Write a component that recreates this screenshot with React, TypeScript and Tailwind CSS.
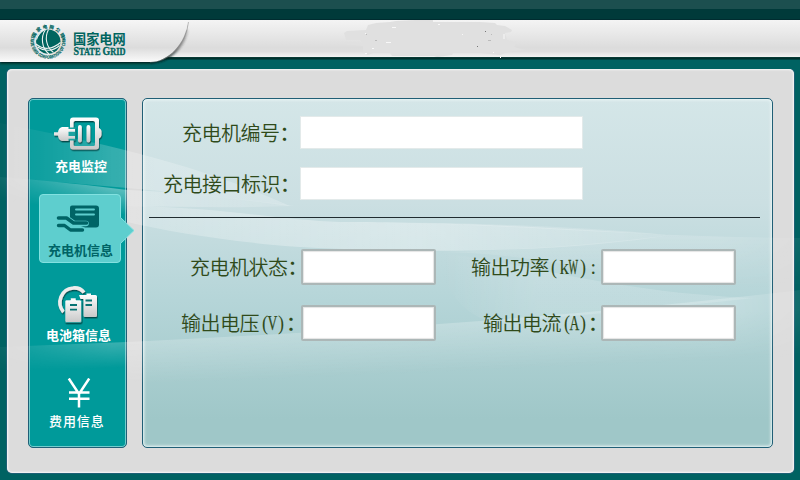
import type { ReactNode } from 'react';

const SANS = "font-['Noto_Sans_CJK_SC',sans-serif]";

function StateGridEmblem() {
  return (
    <svg className="h-[38px] w-[38px] shrink-0" viewBox="0 0 38 38">
      <defs>
        <path id="ring-top" d="M4.8 19.5 A14.2 14.2 0 0 1 33.2 19.5" />
        <path id="ring-bottom" d="M2.8 12 A17.4 17.4 0 1 0 35.2 12" />
      </defs>
      <circle cx="19.3" cy="18.6" r="12.2" fill="#00655f" />
      <g fill="none" stroke="#eef3f2" strokeWidth="1.1">
        <path d="M16.5 6.500 C11.500 14 12.500 25 20 31" />
        <path d="M19.500 6.500 C15.500 14 17 24 24.500 29.500" />
        <path d="M7 21 C14 27 23 27 31.500 19.500" />
        <path d="M8.500 24 C15 28.500 24 28.500 30.500 22.500" />
        <path d="M7.500 16.500 C9 11.500 11.500 9 15 7" />
      </g>
      <g fill="#00655f" stroke="#00655f" strokeWidth="0.15" className={SANS} fontWeight="700">
        <text fontSize="4.600">
          <textPath href="#ring-top" startOffset="5" textLength="35">国家电网公司</textPath>
        </text>
        <text fontSize="4.300">
          <textPath href="#ring-bottom" startOffset="1" textLength="66" lengthAdjust="spacingAndGlyphs">STATE GRID CORPORATION OF CHINA</textPath>
        </text>
      </g>
    </svg>
  );
}

function Header() {
  return (
    <header className="relative h-[69px] shrink-0 bg-[#006262]">
      <div className="h-[9px] bg-[#1c4f4f]" />
      <div className="h-[11px] border-b border-[#002c30] bg-[#003a3a]" />
      <div className="h-[37px] bg-[linear-gradient(#f4f4f4,#dcdcdc_75%,#dedede_85%,#f3f3f3)]" />
      <div className="h-[3px] bg-[linear-gradient(#0c4039,#002f2c_50%,#00504f)]" />
      <svg className="absolute left-0 top-5 h-[49px] w-full" viewBox="0 20 800 49">
        <defs>
          <linearGradient id="tab" x1="0" y1="0" x2="0" y2="1">
            <stop offset="0" stopColor="#f6f6f6" />
            <stop offset="0.66" stopColor="#dcdcdc" />
            <stop offset="1" stopColor="#fafafa" />
          </linearGradient>
          <linearGradient id="tab-shade" gradientUnits="userSpaceOnUse" x1="188" y1="22" x2="165" y2="60">
            <stop offset="0" stopColor="#444" stopOpacity="0.2" />
            <stop offset="0.6" stopColor="#333" stopOpacity="0.5" />
            <stop offset="1" stopColor="#001f1c" stopOpacity="0.95" />
          </linearGradient>
          <filter id="tab-shadow" x="-5%" y="-10%" width="112%" height="130%">
            <feGaussianBlur stdDeviation="1.3" />
          </filter>
        </defs>
        <path
          d="M340 44 L348 42 L363 43 L360 40 L346 40 L344 33 L347 31 L366 30 L368 25 L376 23 L390 22 L396 21 L415 20 H433 V22 L480 22 L495 23 L497 25 L505 26 L512 30 L511 32 L505 33 L507 40 L517 42 L514 47 L525 50 L508 52 L500 55 L480 53 L453 53 L452 55 L437 57 L434 56 L392 56 L390 53 L373 53 L368 55 L363 52 V46 Z"
          fill="#e0e0e0"
        />
        <path d="M392 27.500h4 M438 24.500h2 M386 42.500h5 M372 48.500h2 M365 53.500h2 M462 34.500h1 M493 52.500h1 M365 33.500h1 M500 57.500h1 M504 34v5" stroke="#f8f8f8" />
        <path d="M485 31.500h1 M477 46.500h1" stroke="#777" />
        <path d="M488 40.500h3 M491 34.500h1 M375 40.500h2 M366 34.500h1" stroke="#bbb" />
        <path d="M0 30 H188 C186 47 169 63.500 150 63.500 H0 Z" fill="url(#tab-shade)" filter="url(#tab-shadow)" />
        <path d="M188.300 22 C186 45 169 62 150 62" fill="none" stroke="#888" strokeWidth="1.200" opacity="0.6" />
        <path d="M0 20 H188 C186 44 168 62 150 62 H0 Z" fill="url(#tab)" />
      </svg>
      <div className="absolute left-[29px] top-[23px] flex text-[#00655f]">
        <StateGridEmblem />
        <div className="ml-[6px] mt-[9px]">
          <div className={`${SANS} h-[14px] text-[13.2px] leading-[14px] font-bold`}>国家电网</div>
          <svg className="h-[13px] w-[54px]" viewBox="0 0 54 13">
            <text x="0.500" y="9" textLength="52" lengthAdjust="spacingAndGlyphs" className="font-['Liberation_Serif',serif]" fontWeight="700" fill="#00655f" stroke="#00655f" strokeWidth="0.350">
              <tspan fontSize="12">S</tspan>
              <tspan fontSize="10">TATE </tspan>
              <tspan fontSize="12">G</tspan>
              <tspan fontSize="10">RID</tspan>
            </text>
          </svg>
        </div>
      </div>
    </header>
  );
}

function LightWaves() {
  return (
    <svg className="pointer-events-none absolute inset-0 z-10 h-full w-full" viewBox="0 0 800 480">
      <defs>
        <linearGradient id="edge" gradientUnits="userSpaceOnUse" x1="0" y1="0" x2="800" y2="0">
          <stop offset="0" stopColor="#fff" stopOpacity="0.15" />
          <stop offset="0.14" stopColor="#fff" stopOpacity="1" />
          <stop offset="0.9" stopColor="#fff" stopOpacity="1" />
          <stop offset="1" stopColor="#fff" stopOpacity="0.3" />
        </linearGradient>
        <mask id="edge-mask" maskUnits="userSpaceOnUse" x="0" y="0" width="800" height="480">
          <rect width="800" height="480" fill="url(#edge)" />
        </mask>
        <linearGradient id="w1" gradientUnits="userSpaceOnUse" x1="0" y1="0" x2="300" y2="0">
          <stop offset="0" stopColor="#fff" stopOpacity="0.1" />
          <stop offset="0.45" stopColor="#fff" stopOpacity="0.22" />
          <stop offset="1" stopColor="#fff" stopOpacity="0.2" />
        </linearGradient>
        <linearGradient id="w2" gradientUnits="userSpaceOnUse" x1="100" y1="184" x2="97" y2="212">
          <stop offset="0" stopColor="#fff" stopOpacity="0.4" />
          <stop offset="1" stopColor="#fff" stopOpacity="0" />
        </linearGradient>
        <linearGradient id="w2-tip" gradientUnits="userSpaceOnUse" x1="127" y1="0" x2="295" y2="0">
          <stop offset="0" stopColor="#fff" stopOpacity="0.28" />
          <stop offset="1" stopColor="#fff" stopOpacity="0.12" />
        </linearGradient>
        <linearGradient id="w3" gradientUnits="userSpaceOnUse" x1="120" y1="0" x2="780" y2="0">
          <stop offset="0" stopColor="#fff" stopOpacity="0.2" />
          <stop offset="0.1" stopColor="#fff" stopOpacity="0.24" />
          <stop offset="0.45" stopColor="#fff" stopOpacity="0.36" />
          <stop offset="1" stopColor="#fff" stopOpacity="0.05" />
        </linearGradient>
        <linearGradient id="w4" gradientUnits="userSpaceOnUse" x1="0" y1="235" x2="0" y2="290">
          <stop offset="0" stopColor="#fff" stopOpacity="0.16" />
          <stop offset="1" stopColor="#fff" stopOpacity="0" />
        </linearGradient>
        <linearGradient id="w5" gradientUnits="userSpaceOnUse" x1="400" y1="327" x2="402" y2="374">
          <stop offset="0" stopColor="#fff" stopOpacity="0.22" />
          <stop offset="1" stopColor="#fff" stopOpacity="0" />
        </linearGradient>
        <linearGradient id="w5-left" gradientUnits="userSpaceOnUse" x1="60" y1="345" x2="61" y2="370">
          <stop offset="0" stopColor="#fff" stopOpacity="0.22" />
          <stop offset="1" stopColor="#fff" stopOpacity="0" />
        </linearGradient>
        <linearGradient id="w6" gradientUnits="userSpaceOnUse" x1="440" y1="0" x2="760" y2="0">
          <stop offset="0" stopColor="#fff" stopOpacity="0" />
          <stop offset="0.3" stopColor="#fff" stopOpacity="0.16" />
          <stop offset="1" stopColor="#fff" stopOpacity="0.16" />
        </linearGradient>
      </defs>
      <g mask="url(#edge-mask)">
        <path d="M0 123 C80 139 190 160 290 206 C190 192 90 185 0 177 Z" fill="url(#w1)" />
        <path d="M0 177 C50 181 90 185 127 190 V226 H0 Z" fill="url(#w2)" />
        <path d="M127 190 C190 192 250 201 295 206 C240 208 180 207 127 206 Z" fill="url(#w2-tip)" />
        <path d="M127 206 C220 207 280 220 340 222 C420 222 520 225 670 235 C580 250 450 255 300 247 C230 242 170 232 127 222 Z" fill="url(#w3)" />
        <path d="M340 222 C480 221 620 237 800 238 V290 H754 C650 290 560 253 440 252 C530 250 600 244 670 235 C560 225 450 222 340 222 Z" fill="url(#w4)" />
        <path d="M440 253 C530 263 610 292 754 298 C650 309 570 317 490 322 C455 310 440 280 440 253 Z" fill="url(#w6)" />
        <path d="M127 342 C350 331 570 318 800 290 V382 H127 Z" fill="url(#w5)" />
        <path d="M0 347 L127 342 V382 H0 Z" fill="url(#w5-left)" />
      </g>
    </svg>
  );
}

function PlugIcon() {
  return (
    <svg className="h-[38px] w-[52px]" viewBox="0 0 52 38">
      <defs>
        <linearGradient id="metal" x1="0" y1="0" x2="0" y2="1">
          <stop offset="0" stopColor="#ffffff" />
          <stop offset="1" stopColor="#c8c8c8" />
        </linearGradient>
        <filter id="drop" x="-20%" y="-20%" width="150%" height="150%">
          <feDropShadow dx="0.600" dy="1.400" stdDeviation="0.700" floodColor="#003e3e" floodOpacity="0.850" />
        </filter>
      </defs>
      <g filter="url(#drop)">
        <path fillRule="evenodd" fill="url(#metal)" d="M19 1.500 H42 Q45 1.500 45 4.500 V12 Q47.500 13.500 47.500 15 V19 Q47.500 21 45 22.500 V30.500 Q45 33.500 42 33.500 H19 Q16 33.500 16 30.500 V4.500 Q16 1.500 19 1.500 Z M21 5 Q19.500 5 19.500 6.500 V28.500 Q19.500 30 21 30 H39.500 Q41 30 41 28.500 V6.500 Q41 5 39.500 5 Z" />
        <path fill="#1fa3a1" d="M13 11.500 H21.500 V24.500 H13 Z" />
        <path fill="url(#metal)" d="M0 16.200 H4 Q4.500 12 8 11 H14.500 V13 H21 V15.800 H14.500 V20 H21 V22.800 H14.500 V25 H8 Q4.500 24 4 19.500 H0 Z" />
        <rect x="24" y="9" width="3.800" height="17.500" rx="1.900" fill="url(#metal)" />
        <rect x="32.500" y="9" width="3.800" height="17.500" rx="1.900" fill="url(#metal)" />
      </g>
    </svg>
  );
}

function HandCardIcon() {
  return (
    <svg className="ml-[7px] h-[30px] w-[46px]" viewBox="0 0 46 30">
      <path fill="#006466" d="M16 0.500 H40 Q43 0.500 43 3.500 V19.500 Q43 22.500 40 22.500 H29 L14 17 V2.500 Q14 0.500 16 0.500 Z" />
      <path d="M20 4.500 H38 M20 9.500 H38" stroke="#5ecece" strokeWidth="1.900" strokeLinecap="round" />
      <path d="M2.500 13.500 H11 L18 18.500 H30" fill="none" stroke="#5ecece" strokeWidth="5.600" strokeLinecap="round" strokeLinejoin="round" />
      <path d="M2.500 20.500 H8.500 L15 25 H28" fill="none" stroke="#5ecece" strokeWidth="4.500" strokeLinecap="round" />
      <path d="M2.500 13 H10.500 L17.500 18 H30.500" fill="none" stroke="#006466" strokeWidth="3.600" strokeLinecap="round" strokeLinejoin="round" />
      <path d="M2.500 20.500 H8.500 L14.500 25 H26.500" fill="none" stroke="#006466" strokeWidth="3.400" strokeLinecap="round" strokeLinejoin="round" />
    </svg>
  );
}

function BatteryIcon() {
  return (
    <svg className="h-[42px] w-[44px]" viewBox="0 0 44 42">
      <g filter="url(#drop)">
        <path d="M6.500 27 C-1 18 4 4 16 3 C20.500 2.500 24.500 4.200 27 7.500" fill="none" stroke="#ececec" strokeWidth="3.600" />
        <path fill="url(#metal)" d="M22 10 H29.500 V8.500 H34 V10 H38.500 Q40 10 40 11.500 V30.500 Q40 32 38.500 32 H28 Q26.500 32 26.500 30.500 V14 H23.500 Z" />
        <path fill="url(#metal)" stroke="#079b9b" strokeWidth="0.600" d="M9.500 15 H13.500 V13 H19 V15 H23 Q24.500 15 24.500 16.500 V36 Q24.500 37.500 23 37.500 H9.500 Q8 37.500 8 36 V16.500 Q8 15 9.500 15 Z" />
      </g>
      <path d="M13 20 H20 M13 24.700 H20 M28.500 15.500 H35 M28.500 20 H35" stroke="#087474" strokeWidth="1.800" />
    </svg>
  );
}

function YenIcon() {
  return (
    <svg className="h-[30px] w-[24px]" viewBox="0 0 24 30">
      <path d="M1.800 0.500 L12 16 L22.200 0.500 M12 15 V29.500 M2 14.500 H22.500 M2 20.800 H22.500" fill="none" stroke="#fff" strokeWidth="2.500" />
    </svg>
  );
}

function NavLabel({ children, className = '' }: { children: ReactNode; className?: string }) {
  return <span className={`${SANS} whitespace-nowrap text-[13px] leading-4 ${className}`}>{children}</span>;
}

function Sidebar() {
  return (
    <nav className="h-[350px] w-[99px] shrink-0 rounded-[5px] border border-[#205f76] bg-[#009a9a] text-white shadow-[inset_0_0_0_1px_#72cdcd]">
      <div className="relative z-20 flex flex-col">
        <div className="flex h-[95px] flex-col items-start pl-[25px] pt-[17px]">
          <PlugIcon />
          <NavLabel className="ml-[1px] mt-[4px] font-bold">充电监控</NavLabel>
        </div>
        <div className="relative ml-[10px] h-[69px] w-[82px] rounded-[4px] border border-[#82e1e0] bg-[#5ecece] pl-[9px] pt-[10px] text-[#006466]">
          <HandCardIcon />
          <NavLabel className="-ml-px mt-[7px] block font-bold">充电机信息</NavLabel>
          <svg className="absolute left-[80px] top-[22px] h-[27px] w-[15px]" viewBox="0 0 15 27">
            <path d="M0 0 L1 1 L14 13.500 L1 26 L0 27 Z" fill="#5ecece" />
            <path d="M0.500 0.500 L14 13.500 L0.500 26.500" fill="none" stroke="#82e1e0" />
          </svg>
        </div>
        <div className="flex h-[93px] flex-col items-start pl-[28px] pt-[22px]">
          <BatteryIcon />
          <NavLabel className="-ml-[11px] font-bold">电池箱信息</NavLabel>
        </div>
        <div className="flex flex-col items-start pl-[38px] pt-[22px]">
          <YenIcon />
          <NavLabel className="-ml-[18px] mt-[5px] font-medium tracking-[0.9px]">费用信息</NavLabel>
        </div>
      </div>
    </nav>
  );
}

function Half({ children, squeeze }: { children: string; squeeze: string }) {
  return (
    <span className="inline-block w-[9.600px] font-['Liberation_Serif',serif] text-[20px] font-normal tracking-normal">
      <span className={`inline-block origin-left ${squeeze}`}>{children}</span>
    </span>
  );
}

function Label({ children, className }: { children: ReactNode; className: string }) {
  return (
    <span lang="zh-CN" className={`${SANS} flex shrink-0 whitespace-nowrap text-[20px] leading-6 font-[350] tracking-[-0.5px] text-[#2f4a1a] [text-spacing-trim:space-all] ${className}`}>
      {children}
    </span>
  );
}

function Colon({ className = '' }: { className?: string }) {
  return <span className={`inline-block w-[19.500px] font-medium ${className}`}>：</span>;
}

function WideBox() {
  return <div className="h-[33px] w-[283px] shrink-0 border border-[#e3eaea] bg-white" />;
}

function ValueBox() {
  return <div className="h-9 w-[135px] shrink-0 rounded-[2px] border-2 border-[#acb7b7] bg-white shadow-[inset_0_0_1px_1px_#e4e4e4]" />;
}

function InfoPanel() {
  return (
    <main className="h-[350px] w-[631px] shrink-0 rounded-[5px] border border-[#205f76] bg-[linear-gradient(#d4e6e8,#cbdfe2_30%,#b5d5d8_58%,#9fc7c8_92%)] shadow-[inset_0_0_3px_1px_#edf7f7]">
      <div className="relative z-20">
        <div className="flex items-center pt-[17px]">
          <Label className="w-[157px] pl-[39px]">充电机编号<Colon /></Label>
          <WideBox />
        </div>
        <div className="flex items-center pt-[18px]">
          <Label className="w-[157px] pl-[20px]">充电接口标识<Colon /></Label>
          <WideBox />
        </div>
        <div className="ml-[6px] mt-[17px] h-px w-[611px] bg-[#202c30]" />
        <div className="flex items-center pt-[31px]">
          <Label className="w-[158px] pl-[47px]">充电机状态<Colon /></Label>
          <ValueBox />
          <Label className="w-[165px] pl-[35px]">
            输出功率
            <Half squeeze="translate-x-[2px] scale-x-90">(</Half>
            <Half squeeze="scale-x-95 translate-x-[0.500px]">k</Half>
            <Half squeeze="scale-x-50 translate-x-[0.500px] [-webkit-text-stroke:0.400px_#2f4a1a]">W</Half>
            <Half squeeze="translate-x-[2px] scale-x-90">)</Half>
            <Half squeeze="translate-x-[3px]">:</Half>
          </Label>
          <ValueBox />
        </div>
        <div className="flex items-center pt-5">
          <Label className="w-[158px] pl-[38px]">
            输出电压
            <Half squeeze="translate-x-[3px] scale-x-90">(</Half>
            <Half squeeze="translate-x-[1.500px] scale-x-[0.680] [-webkit-text-stroke:0.250px_#2f4a1a]">V</Half>
            <Half squeeze="translate-x-[3px] scale-x-90">)</Half>
            <Colon className="translate-x-[4px]" />
          </Label>
          <ValueBox />
          <Label className="w-[165px] pl-[47px]">
            输出电流
            <Half squeeze="translate-x-[3px] scale-x-90">(</Half>
            <Half squeeze="translate-x-[1.500px] scale-x-[0.680] [-webkit-text-stroke:0.250px_#2f4a1a]">A</Half>
            <Half squeeze="translate-x-[3px] scale-x-90">)</Half>
            <Colon className="translate-x-[4px]" />
          </Label>
          <ValueBox />
        </div>
      </div>
    </main>
  );
}

export default function App() {
  return (
    <div className="relative flex h-[480px] w-[800px] flex-col overflow-hidden bg-[#006262]">
      <Header />
      <div className="ml-[7px] flex h-[404px] w-[787px] gap-[15px] rounded-[5px] bg-[#dcdcdc] pl-[21px] pt-[29px] shadow-[0_0_0_1px_#1d6075,inset_0_0_2px_1px_#f7f7f7]">
        <Sidebar />
        <InfoPanel />
      </div>
      <LightWaves />
    </div>
  );
}
